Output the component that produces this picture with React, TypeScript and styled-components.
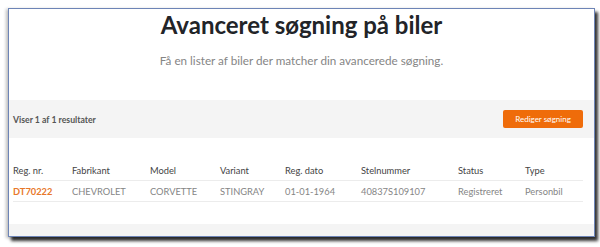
import React from "react";
import styled, { createGlobalStyle } from "styled-components";

const Global = createGlobalStyle`
  html, body { margin: 0; padding: 0; background: #ffffff; }
  body { font-family: Lato, "Noto Sans", sans-serif; }
`;

const Stage = styled.div`
  width: 600px;
  height: 247px;
  padding: 8px 0 0 8px;
  box-sizing: border-box;
  background: #ffffff;
`;

const Frame = styled.div`
  width: 587px;
  height: 229px;
  box-sizing: border-box;
  border: 1.5px solid #6d84b6;
  background: #ffffff;
  box-shadow: 3px 4px 3px rgba(0, 0, 0, 0.8), -2px 1px 3px rgba(0, 0, 0, 0.25);
  display: flex;
  flex-direction: column;
  overflow: hidden;
`;

const Hero = styled.header`
  height: 91px;
  display: flex;
  flex-direction: column;
  align-items: center;
  box-sizing: border-box;
  padding-top: 2px;
`;

const Title = styled.h1`
  margin: 0;
  font-size: 24px;
  line-height: 28px;
  font-weight: 700;
  color: #222428;
`;

const Subtitle = styled.p`
  margin: 14px 0 0;
  font-size: 11.7px;
  line-height: 14px;
  color: #858585;
`;

const Toolbar = styled.div`
  height: 38px;
  background: #f4f4f4;
  display: flex;
  align-items: center;
  justify-content: space-between;
  padding: 0 11px 0 4px;
  box-sizing: border-box;
`;

const Count = styled.span`
  font-size: 8.7px;
  font-weight: 700;
  color: #555555;
  padding-top: 1px;
`;

const Button = styled.button`
  width: 80px;
  height: 18px;
  border: none;
  border-radius: 2px;
  background: #ef6c0a;
  color: #ffffff;
  font-family: inherit;
  font-size: 8px;
  padding: 0;
  cursor: pointer;
`;

const Results = styled.section`
  flex: 1;
  padding: 22px 11px 0 4px;
  box-sizing: border-box;
`;

const Row = styled.div<{ $head?: boolean }>`
  display: grid;
  grid-template-columns: 59px 78px 70px 65px 76px 97px 67px 1fr;
  align-items: center;
  height: 20px;
  border-bottom: 1px solid #ececec;
  font-size: 9.3px;
  color: ${(p) => (p.$head ? "#444444" : "#858585")};
`;

const Cell = styled.span<{ $accent?: boolean }>`
  white-space: nowrap;
  ${(p) => (p.$accent ? "color: #e8782a; font-weight: 700;" : "")}
`;

const Footer = styled.div`
  height: 12px;
  background: #f4f4f4;
`;

const headers = ["Reg. nr.", "Fabrikant", "Model", "Variant", "Reg. dato", "Stelnummer", "Status", "Type"];
const rows = [["DT70222", "CHEVROLET", "CORVETTE", "STINGRAY", "01-01-1964", "40837S109107", "Registreret", "Personbil"]];

export default function App() {
  return (
    <Stage>
      <Global />
      <Frame>
        <Hero>
          <Title>Avanceret søgning på biler</Title>
          <Subtitle>Få en lister af biler der matcher din avancerede søgning.</Subtitle>
        </Hero>
        <Toolbar>
          <Count>Viser 1 af 1 resultater</Count>
          <Button>Rediger søgning</Button>
        </Toolbar>
        <Results>
          <Row $head>
            {headers.map((h) => (
              <Cell key={h}>{h}</Cell>
            ))}
          </Row>
          {rows.map((r) => (
            <Row key={r[0]}>
              {r.map((c, i) => (
                <Cell key={i} $accent={i === 0}>
                  {c}
                </Cell>
              ))}
            </Row>
          ))}
        </Results>
        <Footer />
      </Frame>
    </Stage>
  );
}
